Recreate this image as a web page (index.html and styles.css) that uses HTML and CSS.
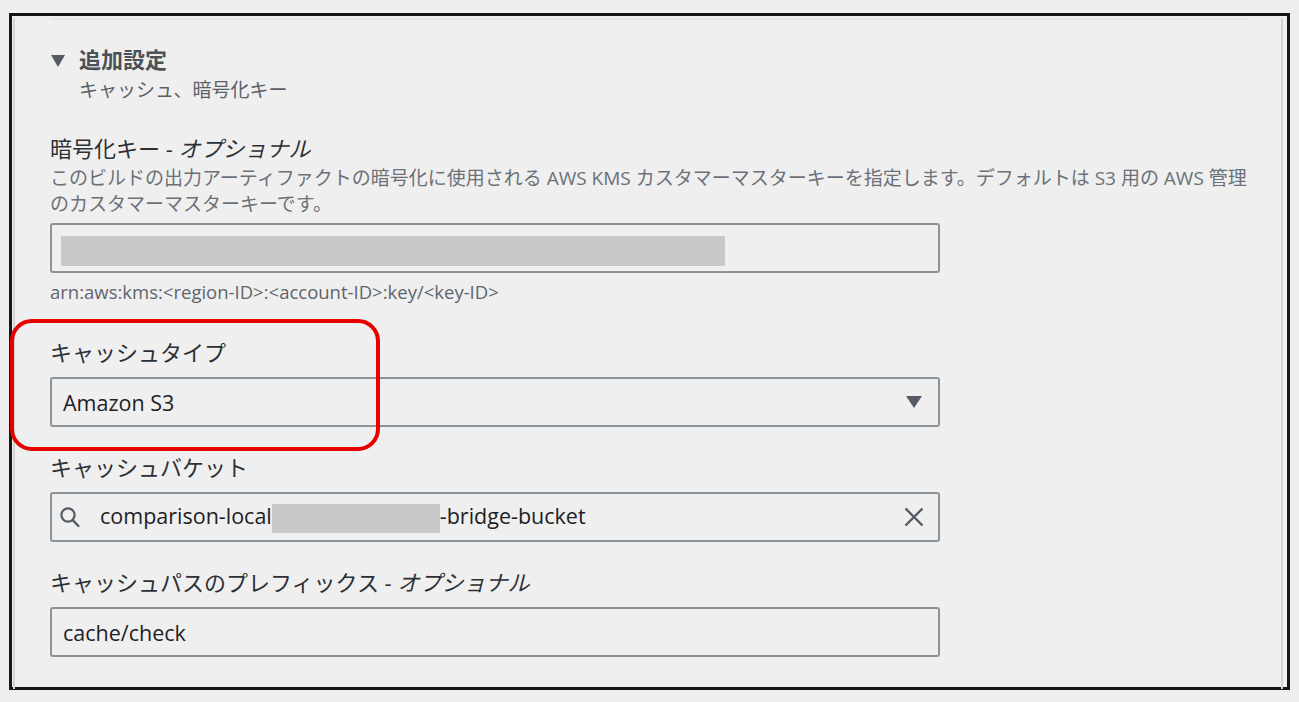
FILE: index.html
```html
<!DOCTYPE html>
<html lang="ja">
<head>
    <meta charset="UTF-8">
    <meta name="viewport" content="width=device-width, initial-scale=1.0">
    <title>追加設定</title>
    <link rel="stylesheet" href="styles.css">
</head>
<body>
    <div class="frame">
        <div class="card">
            <div class="divider"></div>
            <div class="content">
                <!-- 折りたたみ見出し -->
                <div class="section-head">
                    <span class="caret"></span>
                    <div>
                        <div class="section-title">追加設定</div>
                        <div class="section-sub">キャッシュ、暗号化キー</div>
                    </div>
                </div>

                <div class="form">
                    <div class="field field-key">
                        <div class="label">暗号化キー - <i>オプショナル</i></div>
                        <div class="desc">このビルドの出力アーティファクトの暗号化に使用される AWS KMS カスタマーマスターキーを指定します。デフォルトは S3 用の AWS 管理のカスタマーマスターキーです。</div>
                        <div class="input"><span class="redacted redacted-key"></span></div>
                        <div class="hint">arn:aws:kms:&lt;region-ID&gt;:&lt;account-ID&gt;:key/&lt;key-ID&gt;</div>
                    </div>

                    <div class="field field-marked">
                        <div class="mark"></div>
                        <div class="label">キャッシュタイプ</div>
                        <div class="input select">
                            <span class="value">Amazon S3</span>
                            <svg class="select-caret" width="16" height="12" viewBox="0 0 16 12"><path d="M0 0h16L8 12z" fill="#545b64"/></svg>
                        </div>
                    </div>

                    <div class="field">
                        <div class="label">キャッシュバケット</div>
                        <div class="input search">
                            <svg class="search-icon" width="20" height="21" viewBox="0 0 20 21"><circle cx="8" cy="8" r="6.6" fill="none" stroke="#545b64" stroke-width="2.2"/><path d="M12.8 13.2L18.4 19" stroke="#545b64" stroke-width="2.4" stroke-linecap="round"/></svg>
                            <span class="value">comparison-local<span class="redacted redacted-bucket"></span>-bridge-bucket</span>
                            <svg class="clear-icon" width="20" height="20" viewBox="0 0 20 20"><path d="M1.5 1.5L18.5 18.5M18.5 1.5L1.5 18.5" stroke="#545b64" stroke-width="2.4"/></svg>
                        </div>
                    </div>

                    <div class="field">
                        <div class="label">キャッシュパスのプレフィックス - <i>オプショナル</i></div>
                        <div class="input"><span class="value">cache/check</span></div>
                    </div>
                </div>
            </div>
        </div>
    </div>
</body>
</html>
```

FILE: styles.css
```css
body {
    margin: 0;
    padding: 13px 0 0 9px;
    background-color: #efefef;
    font-family: "Open Sans", "Noto Sans CJK JP", sans-serif;
}
.frame {
    width: 1281px;
    height: 677px;
    box-sizing: border-box;
    border: 3px solid #161616;
    padding: 0 4px 0 1px;
}
.card {
    height: 100%;
    border-left: 2px solid #d2d2d2;
    border-right: 2px solid #d2d2d2;
}
.divider {
    margin: 2px 32px 0 35px;
    border-top: 2px solid #e4e4e4;
}
.content {
    padding: 24px 28px 0 35px;
}
.section-head {
    display: flex;
    align-items: flex-start;
}
.caret {
    width: 0;
    height: 0;
    margin: 11px 14px 0 1px;
    border-left: 7.5px solid transparent;
    border-right: 7.5px solid transparent;
    border-top: 12px solid #545b64;
}
.section-title {
    font-size: 22px;
    line-height: 30px;
    font-weight: bold;
    color: #4b5159;
}
.section-sub {
    margin-top: 3px;
    font-size: 19px;
    line-height: 26px;
    color: #5a6068;
}
.form {
    margin-top: 30px;
    display: flex;
    flex-direction: column;
    gap: 25px;
}
.field-key {
    margin-bottom: 10px;
}
.field-marked {
    position: relative;
}
.mark {
    position: absolute;
    left: -40px;
    top: -18px;
    width: 370px;
    height: 132px;
    box-sizing: border-box;
    border: 4px solid #e60000;
    border-radius: 22px;
}
.label {
    font-size: 22px;
    line-height: 30px;
    color: #2c3035;
}
.desc {
    margin-top: 2px;
    max-width: 1200px;
    font-size: 19px;
    line-height: 26px;
    color: #6b7178;
}
.input {
    margin-top: 10px;
    width: 890px;
    height: 50px;
    box-sizing: border-box;
    border: 2px solid #8c949b;
    border-radius: 3px;
    padding: 0 11px;
    display: flex;
    align-items: center;
    font-size: 21.5px;
    color: #1d2125;
}
.field-key .input {
    margin-top: 6px;
}
.hint {
    margin-top: 9px;
    font-size: 18.5px;
    line-height: 20px;
    color: #5f656c;
}
.redacted {
    display: inline-block;
    background-color: #c8c8c8;
}
.redacted-key {
    width: 664px;
    height: 30px;
    margin: 6px 0 0 -2px;
}
.redacted-bucket {
    width: 168px;
    height: 29px;
    vertical-align: middle;
}
.value {
    flex: 1;
    white-space: nowrap;
}
.select {
    padding-right: 16px;
}
.search {
    padding: 0 14px 0 8px;
}
.search-icon {
    margin-right: 20px;
}
```
